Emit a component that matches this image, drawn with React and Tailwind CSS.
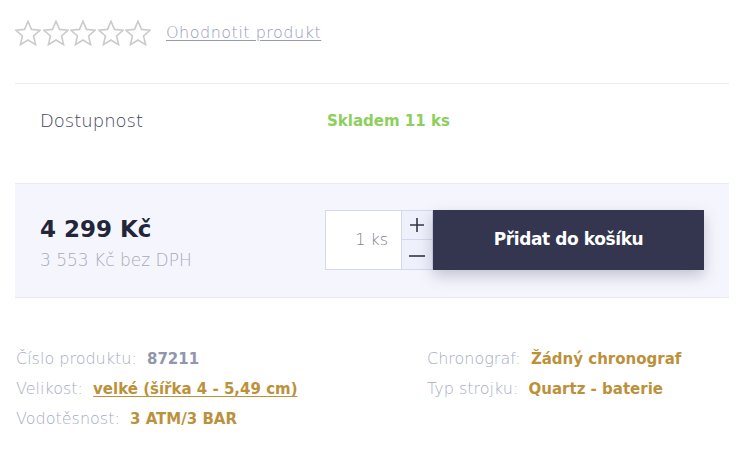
import React from "react";

const Star = () => (
  <svg width="26" height="26" viewBox="1.5 1.5 21 21" fill="none" stroke="#cbcbcb" strokeWidth="1.3" strokeLinejoin="miter">
    <path d="M12 2.5l2.8 6.6 7.1.6-5.4 4.7 1.6 7-6.1-3.7-6.1 3.7 1.6-7-5.4-4.7 7.1-.6z" />
  </svg>
);

export default function App() {
  return (
    <div className="w-[744px] h-[460px] bg-white" style={{ fontFamily: '"DejaVu Sans", sans-serif' }}>
      <div className="flex items-start pl-[15px] pt-[20px] h-[83px]">
        <div className="flex gap-[1.5px]">
          <Star /><Star /><Star /><Star /><Star />
        </div>
        <a className="ml-[15px] mt-[1px] text-[16px] tracking-[0.5px] text-[#959ab8] underline underline-offset-2 font-extralight">Ohodnotit produkt</a>
      </div>
      <div className="mx-[15px] border-t border-[#ebecf3]">
        <div className="flex h-[99px] items-start pt-[23px]">
          <div className="pl-[25px] w-[312px] text-[18px] text-[#42455a] font-extralight">Dostupnost</div>
          <div className="text-[15px] mt-[3px] font-bold text-[#8ccf5b]">Skladem 11 ks</div>
        </div>
        <div className="bg-[#f5f6fd] border-y border-[#ebecf3] h-[115px] flex items-center pl-[25px] pr-[25px]">
          <div className="flex-1 mt-[6px]">
            <div className="text-[23px] font-bold text-[#232539] leading-[30px]">4 299 Kč</div>
            <div className="text-[17px] text-[#a6a9bc] font-extralight mt-[4px]">3 553 Kč bez DPH</div>
          </div>
          <div className="flex h-[60px] -mt-[2px]">
            <div className="w-[77px] bg-white border border-[#d3d8ee] flex items-center justify-end pr-[13px] text-[16px] text-[#7d7f8f] font-extralight">1 ks</div>
            <div className="w-[31px] flex flex-col border-y border-r border-[#d3d8ee] bg-[#eef0fb]">
              <div className="flex-1 flex items-center justify-center border-b border-[#d3d8ee]">
                <svg width="14" height="14" viewBox="0 0 14 14" stroke="#333645" strokeWidth="1.6"><path d="M7 0v14M0 7h14" /></svg>
              </div>
              <div className="flex-1 flex items-center justify-center">
                <svg width="16" height="14" viewBox="0 0 16 14" stroke="#333645" strokeWidth="1.6"><path d="M0 9h16" /></svg>
              </div>
            </div>
            <button className="w-[271px] bg-[#33364e] text-white text-[17px] tracking-[-0.4px] font-bold shadow-[0_6px_14px_rgba(40,45,80,0.25)]">Přidat do košíku</button>
          </div>
        </div>
      </div>
      <div className="flex pl-[16px] pt-[49px] text-[16px] font-extralight text-[#a7acc6]">
        <div className="w-[411px] flex flex-col gap-[6px]">
          <div>Číslo produktu:&nbsp; <span className="font-bold text-[15px] text-[#9196ad]">87211</span></div>
          <div>Velikost:&nbsp; <span className="font-bold text-[15px] text-[#bc913b] underline underline-offset-2">velké (šířka 4 - 5,49 cm)</span></div>
          <div>Vodotěsnost:&nbsp; <span className="font-bold text-[15px] text-[#bc913b]">3 ATM/3 BAR</span></div>
        </div>
        <div className="flex flex-col gap-[6px]">
          <div>Chronograf:&nbsp; <span className="font-bold text-[15px] text-[#bc913b]">Žádný chronograf</span></div>
          <div>Typ strojku:&nbsp; <span className="font-bold text-[15px] text-[#bc913b]">Quartz - baterie</span></div>
        </div>
      </div>
    </div>
  );
}
